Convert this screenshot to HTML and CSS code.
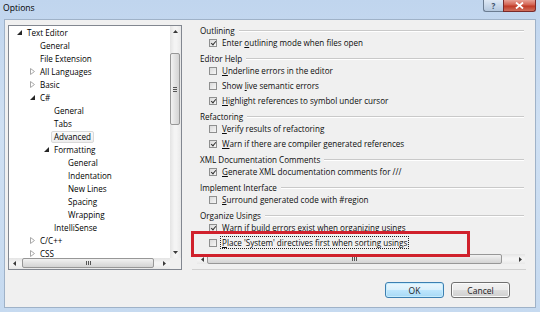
FILE: index.html
```html
<!DOCTYPE html>
<html>
<head>
<meta charset="utf-8">
<title>Options</title>
<link rel="stylesheet" href="styles.css">
</head>
<body>
<div class="window">
  <div class="titlebar">
    <span class="title">Options</span>
    <div class="caption">
      <div class="cap-btn help">?</div>
      <div class="cap-btn close"><svg width="9" height="7" viewBox="0 0 9 7"><path d="M1 0.5 L8 6.5 M8 0.5 L1 6.5" stroke="#fff" stroke-width="1.8"/></svg></div>
    </div>
  </div>
  <div class="client">
    <div class="main">
      <div class="tree">
        <div class="tree-body">
          <div class="tree-rows">
            <div class="row l0"><span class="arrow"><svg width="5" height="5" viewBox="0 0 5 5"><path d="M5 0 L5 5 L0 5 Z" fill="#262626"/></svg></span><span class="lbl">Text Editor</span></div>
            <div class="row l1"><span class="arrow"></span><span class="lbl">General</span></div>
            <div class="row l1"><span class="arrow"></span><span class="lbl">File Extension</span></div>
            <div class="row l1"><span class="arrow"><svg width="5" height="7" viewBox="0 0 5 7"><path d="M0.5 0.5 L4.5 3.5 L0.5 6.5 Z" fill="none" stroke="#a8a8a8"/></svg></span><span class="lbl">All Languages</span></div>
            <div class="row l1"><span class="arrow"><svg width="5" height="7" viewBox="0 0 5 7"><path d="M0.5 0.5 L4.5 3.5 L0.5 6.5 Z" fill="none" stroke="#a8a8a8"/></svg></span><span class="lbl">Basic</span></div>
            <div class="row l1"><span class="arrow"><svg width="5" height="5" viewBox="0 0 5 5"><path d="M5 0 L5 5 L0 5 Z" fill="#262626"/></svg></span><span class="lbl">C#</span></div>
            <div class="row l2"><span class="arrow"></span><span class="lbl">General</span></div>
            <div class="row l2"><span class="arrow"></span><span class="lbl">Tabs</span></div>
            <div class="row l2"><span class="arrow"></span><span class="lbl sel">Advanced</span></div>
            <div class="row l2"><span class="arrow"><svg width="5" height="5" viewBox="0 0 5 5"><path d="M5 0 L5 5 L0 5 Z" fill="#262626"/></svg></span><span class="lbl">Formatting</span></div>
            <div class="row l3"><span class="arrow"></span><span class="lbl">General</span></div>
            <div class="row l3"><span class="arrow"></span><span class="lbl">Indentation</span></div>
            <div class="row l3"><span class="arrow"></span><span class="lbl">New Lines</span></div>
            <div class="row l3"><span class="arrow"></span><span class="lbl">Spacing</span></div>
            <div class="row l3"><span class="arrow"></span><span class="lbl">Wrapping</span></div>
            <div class="row l2"><span class="arrow"></span><span class="lbl">IntelliSense</span></div>
            <div class="row l1"><span class="arrow"><svg width="5" height="7" viewBox="0 0 5 7"><path d="M0.5 0.5 L4.5 3.5 L0.5 6.5 Z" fill="none" stroke="#a8a8a8"/></svg></span><span class="lbl">C/C++</span></div>
            <div class="row l1"><span class="arrow"><svg width="5" height="7" viewBox="0 0 5 7"><path d="M0.5 0.5 L4.5 3.5 L0.5 6.5 Z" fill="none" stroke="#a8a8a8"/></svg></span><span class="lbl">CSS</span></div>
          </div>
          <div class="vscroll">
            <div class="sb-btn"><svg width="5" height="3" viewBox="0 0 5 3"><path d="M0 3 L2.5 0 L5 3 Z" fill="#3a3a3a"/></svg></div>
            <div class="vthumb"><span class="grip-v"></span></div>
            <div class="sb-fill"></div>
            <div class="sb-btn"><svg width="5" height="3" viewBox="0 0 5 3"><path d="M0 0 L2.5 3 L5 0 Z" fill="#3a3a3a"/></svg></div>
          </div>
        </div>
        <div class="hscroll">
          <div class="sb-btn"><svg width="3" height="5" viewBox="0 0 3 5"><path d="M3 0 L0 2.5 L3 5 Z" fill="#3a3a3a"/></svg></div>
          <div class="hthumb tree-thumb"><span class="grip-h"></span></div>
          <div class="sb-fill"></div>
          <div class="sb-btn"><svg width="3" height="5" viewBox="0 0 3 5"><path d="M0 0 L3 2.5 L0 5 Z" fill="#3a3a3a"/></svg></div>
          <div class="corner"></div>
        </div>
      </div>
      <div class="settings">
        <div class="groups">
          <div class="group">
            <div class="ghead"><span>Outlining</span></div>
            <div class="item"><span class="cb on"></span><span>Enter <u>o</u>utlining mode when files open</span></div>
          </div>
          <div class="group">
            <div class="ghead"><span>Editor Help</span></div>
            <div class="item"><span class="cb"></span><span><u>U</u>nderline errors in the editor</span></div>
            <div class="item"><span class="cb"></span><span>Show <u>l</u>ive semantic errors</span></div>
            <div class="item"><span class="cb on"></span><span><u>H</u>ighlight references to symbol under cursor</span></div>
          </div>
          <div class="group">
            <div class="ghead"><span>Refactoring</span></div>
            <div class="item"><span class="cb"></span><span><u>V</u>erify results of refactoring</span></div>
            <div class="item"><span class="cb on"></span><span><u>W</u>arn if there are compiler generated references</span></div>
          </div>
          <div class="group">
            <div class="ghead"><span>XML Documentation Comments</span></div>
            <div class="item"><span class="cb on"></span><span><u>G</u>enerate XML documentation comments for ///</span></div>
          </div>
          <div class="group">
            <div class="ghead"><span>Implement Interface</span></div>
            <div class="item"><span class="cb"></span><span><u>S</u>urround generated code with #region</span></div>
          </div>
          <div class="group">
            <div class="ghead"><span>Organize Usings</span></div>
            <div class="item"><span class="cb on"></span><span>Warn if build errors exist when organizing usings</span></div>
            <div class="item"><span class="cb"></span><span class="focus"><u>P</u>lace 'System' directives first when sorting usings</span></div>
          </div>
        </div>
        <div class="hscroll wide">
          <div class="sb-btn"><svg width="3" height="5" viewBox="0 0 3 5"><path d="M3 0 L0 2.5 L3 5 Z" fill="#3a3a3a"/></svg></div>
          <div class="hthumb set-thumb"><span class="grip-h"></span></div>
          <div class="sb-fill"></div>
          <div class="sb-btn"><svg width="3" height="5" viewBox="0 0 3 5"><path d="M0 0 L3 2.5 L0 5 Z" fill="#3a3a3a"/></svg></div>
        </div>
      </div>
    </div>
    <div class="footer">
      <button class="btn ok">OK</button>
      <button class="btn">Cancel</button>
    </div>
  </div>
  <div class="annot"></div>
</div>
</body>
</html>
```
FILE: styles.css
```css
* { box-sizing: border-box; }
html, body { margin: 0; padding: 0; }
body {
  width: 540px;
  height: 312px;
  overflow: hidden;
  font-family: "Open Sans", "Noto Sans", "DejaVu Sans", sans-serif;
  font-size: 8.1px;
  color: #0c0c0c;
}
.window {
  position: relative;
  width: 540px;
  height: 312px;
  display: flex;
  flex-direction: column;
  background: linear-gradient(to bottom, #c0d5ee 0%, #cfe0f3 40%, #c6daf0 100%);
}
.titlebar {
  height: 19px;
  display: flex;
  align-items: flex-start;
  justify-content: space-between;
  padding: 0 4px 0 3px;
}
.title {
  font-size: 8.6px;
  line-height: 16px;
  color: #000;
}
.caption { display: flex; }
.cap-btn {
  height: 12px;
  display: flex;
  align-items: center;
  justify-content: center;
  border: 1px solid #6b7c91;
  border-top: none;
}
.help {
  width: 20px;
  border-radius: 0 0 0 3px;
  background: linear-gradient(to bottom, #dfe9f5 0%, #c9d8ea 50%, #b5c8de 100%);
  color: #3b4f68;
  font-size: 8px;
  font-weight: bold;
  border-right: none;
}
.close {
  width: 33px;
  border-radius: 0 0 3px 0;
  border-color: #7a2a2a;
  background: linear-gradient(to bottom, #e8a196 0%, #d2604f 45%, #c03a26 55%, #d0705e 100%);
}
.client {
  flex: 1;
  margin: 0 4px 4px 4px;
  background: #f0f0f0;
  border: 1px solid #9fb2c8;
  display: flex;
  flex-direction: column;
}
.main {
  display: flex;
  margin-top: 5px;
  height: 245px;
}
.tree {
  margin-left: 3px;
  width: 174px;
  height: 245px;
  border: 1px solid #828790;
  background: #fff;
  display: flex;
  flex-direction: column;
}
.tree-body {
  display: flex;
  height: 232px;
}
.tree-rows {
  flex: 1;
  overflow: hidden;
  color: #000;
}
.row {
  height: 13px;
  display: flex;
  align-items: center;
  white-space: nowrap;
}
.l0 { padding-left: 5px; }
.l1 { padding-left: 18px; }
.l2 { padding-left: 32px; }
.l3 { padding-left: 46px; }
.arrow {
  width: 13px;
  height: 13px;
  display: flex;
  align-items: center;
  padding-left: 3px;
}
.lbl {
  margin-left: -3px;
  padding: 0 2px;
  border: 1px solid transparent;
  line-height: 10px;
}
.lbl.sel {
  border-color: #d9d9d9;
  background: linear-gradient(to bottom, #fafafa, #eeeeee);
  border-radius: 2px;
}
.vscroll {
  width: 11px;
  display: flex;
  flex-direction: column;
  background: linear-gradient(to right, #e4e4e4, #f4f4f4 40%, #f4f4f4 60%, #e8e8e8);
}
.sb-btn {
  width: 11px;
  height: 11px;
  flex: none;
  display: flex;
  align-items: center;
  justify-content: center;
}
.vthumb {
  margin: 16px 0 0 0;
  width: 10px;
  height: 72px;
  border: 1px solid #979797;
  border-radius: 2px;
  background: linear-gradient(to right, #f2f2f2, #e2e2e2 50%, #d4d4d4);
  display: flex;
  align-items: center;
  justify-content: center;
}
.grip-v {
  width: 4px;
  height: 5px;
  background: repeating-linear-gradient(to bottom, #555 0 1px, transparent 1px 2px);
}
.sb-fill { flex: 1; }
.hscroll {
  height: 11px;
  display: flex;
  background: linear-gradient(to bottom, #e4e4e4, #f4f4f4 40%, #f4f4f4 60%, #e8e8e8);
}
.hthumb {
  height: 10px;
  border: 1px solid #979797;
  border-radius: 2px;
  background: linear-gradient(to bottom, #f2f2f2, #e2e2e2 50%, #d4d4d4);
  display: flex;
  align-items: center;
  justify-content: center;
}
.tree-thumb { margin-left: 2px; width: 132px; }
.grip-h {
  width: 5px;
  height: 4px;
  background: repeating-linear-gradient(to right, #555 0 1px, transparent 1px 2px);
}
.corner {
  width: 11px;
  background: #f0f0f0;
}
.settings {
  margin-left: 10px;
  width: 334px;
  border-bottom: 1px solid #d0d0d0;
  display: flex;
  flex-direction: column;
}
.groups {
  padding: 0 2px 0 8px;
}
.group { margin-bottom: 3px; }
.ghead {
  height: 10px;
  display: flex;
  align-items: center;
  white-space: nowrap;
}
.ghead::after {
  content: "";
  flex: 1;
  margin-left: 4px;
  margin-top: 2px;
  border-top: 1px solid #c9c9c9;
  border-bottom: 1px solid #ffffff;
}
.item {
  height: 15px;
  display: flex;
  align-items: center;
  padding-left: 9px;
  white-space: nowrap;
}
.cb {
  width: 8px;
  height: 8px;
  flex: none;
  margin-right: 5px;
  border: 1px solid #8e8f8f;
  background: linear-gradient(135deg, #dadada, #f6f6f6);
  position: relative;
}
.cb.on::after {
  content: "";
  position: absolute;
  left: 2px;
  top: 0px;
  width: 2px;
  height: 4px;
  border-right: 1px solid #333;
  border-bottom: 1px solid #333;
  transform: rotate(40deg);
}
.focus {
  outline: 1px dotted #222;
  outline-offset: 0px;
  line-height: 11px;
  padding: 0 1px;
  margin-left: -1px;
}
.hscroll.wide {
  margin: 1px 1px 0 5px;
  height: 10px;
}
.hscroll.wide .sb-btn { height: 10px; width: 10px; }
.set-thumb { width: 295px; }
.footer {
  display: flex;
  justify-content: flex-end;
  gap: 7px;
  padding: 12px 25px 0 0;
}
.btn {
  width: 59px;
  height: 16px;
  padding: 0;
  font-family: inherit;
  font-size: 8.5px;
  color: #1a1a1a;
  border: 1px solid #707070;
  border-radius: 3px;
  background: linear-gradient(to bottom, #f2f2f2 0%, #ebebeb 50%, #dddddd 51%, #cfcfcf 100%);
  box-shadow: inset 0 0 0 1px #fbfbfb;
}
.btn.ok {
  border-color: #3c7fb1;
  background: linear-gradient(to bottom, #eaf6fd 0%, #d9f0fc 50%, #bee6fd 51%, #a7d9f5 100%);
  box-shadow: inset 0 0 0 1px #c6ecfd;
}
.annot {
  position: absolute;
  left: 191px;
  top: 231px;
  width: 279px;
  height: 26px;
  border: 3px solid #d0212c;
}
```
